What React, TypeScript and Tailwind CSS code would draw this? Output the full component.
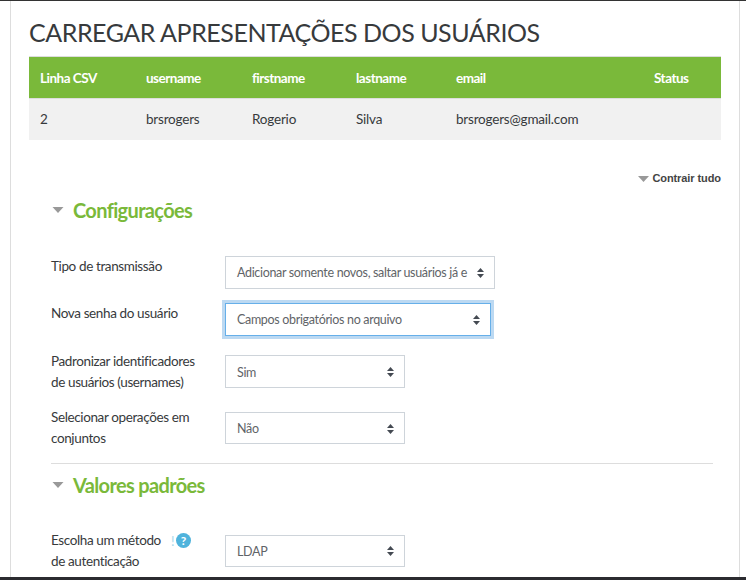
const sans = "font-['Lato','Liberation_Sans',sans-serif]";

function Caret() {
  return (
    <svg width="14" height="8" viewBox="0 0 14 8" className="shrink-0">
      <path d="M1.5 1H12.5L7 7Z" fill="#999999" />
    </svg>
  );
}

function Updown() {
  return (
    <svg width="7" height="10" viewBox="0 0 7 10" className="shrink-0">
      <path d="M3.5 0L7 4H0Z M3.5 10L0 6H7Z" fill="#444a52" />
    </svg>
  );
}

function Select({ text, w, focus, extra }: { text: string; w: string; focus?: boolean; extra?: string }) {
  return (
    <div
      className={`${w} ${extra ?? "h-[33px]"} flex items-center justify-between bg-white pl-[11px] pr-[10px] text-[12.5px] tracking-[-0.33px] text-[#5f6468] border ${
        focus ? "border-[#66afe9] shadow-[0_0_0_3px_#bcd9f2]" : "border-[#ced4da]"
      }`}
    >
      <span className="whitespace-nowrap">{text}</span>
      <Updown />
    </div>
  );
}

function Section({ title, className }: { title: string; className: string }) {
  return (
    <div className={`flex items-center ${className}`}>
      <Caret />
      <h3 className="ml-[8px] text-[20px] leading-[24px] font-bold tracking-[-0.65px] text-[#7ab93a]">{title}</h3>
    </div>
  );
}

const cols = [
  ["Linha CSV", "2", "w-[106px]"],
  ["username", "brsrogers", "w-[106px]"],
  ["firstname", "Rogerio", "w-[104px]"],
  ["lastname", "Silva", "w-[100px]"],
  ["email", "brsrogers@gmail.com", "w-[198px]"],
  ["Status", "", "w-[78px]"],
];

export default function App() {
  return (
    <div className={`h-[580px] w-[746px] flex flex-col overflow-hidden bg-white ${sans}`}>
      <div className="h-px bg-[#333333] shrink-0" />
      <div className="flex-1 min-h-0 ml-[10px] mr-[6px] border-x border-[#dddddd] pl-[18px] pr-[18px] overflow-hidden">
        <h2 className="mt-[14px] h-[41px] text-[25px] leading-[34px] tracking-[-0.46px] text-[#373a3c] whitespace-nowrap">
          CARREGAR APRESENTAÇÕES DOS USUÁRIOS
        </h2>
        <div className="border-t border-[#dddddd] text-[13.5px]">
          <div className="flex h-[41px] items-center bg-[#7ab93a] pt-px font-bold tracking-[-0.5px] text-white">
            {cols.map((c) => (
              <div key={c[0]} className={`${c[2]} pl-[11px] shrink-0`}>{c[0]}</div>
            ))}
          </div>
          <div className="h-px bg-[#dddddd]" />
          <div className="flex h-[41px] items-center bg-[#f1f1f1] pb-px tracking-[-0.2px] text-[#373a3c]">
            {cols.map((c) => (
              <div key={c[0]} className={`${c[2]} pl-[11px] shrink-0`}>{c[1]}</div>
            ))}
          </div>
        </div>
        <div className="mt-[32px] flex items-center justify-end gap-[3px] font-['Liberation_Sans',sans-serif] text-[11px] leading-[13px] font-bold tracking-[-0.08px] text-[#444444]">
          <svg width="11" height="6" viewBox="0 0 11 6"><path d="M0 0H11L5.5 6Z" fill="#999999" /></svg>
          Contrair tudo
        </div>
        <div className="pl-[22px] pr-[8px] text-[13.5px] leading-[21px] tracking-[-0.38px] text-[#373a3c]">
          <Section title="Configurações" className="mt-[13px]" />
          <div className="mt-[34px] flex">
            <div className="w-[174px]">Tipo de transmissão</div>
            <Select text="Adicionar somente novos, saltar usuários já e" w="w-[270px]" />
          </div>
          <div className="mt-[14px] flex">
            <div className="w-[174px]">Nova senha do usuário</div>
            <Select text="Campos obrigatórios no arquivo" w="w-[266px]" focus />
          </div>
          <div className="mt-[19px] flex">
            <div className="w-[174px] -mt-[4px]">Padronizar identificadores<br />de usuários (usernames)</div>
            <Select text="Sim" w="w-[180px]" extra="h-[33px] pt-px" />
          </div>
          <div className="mt-[19px] flex">
            <div className="w-[174px] -mt-[5px]">Selecionar operações em<br />conjuntos</div>
            <Select text="Não" w="w-[180px]" extra="h-[32px] pt-px" />
          </div>
          <div className="mt-[14px] border-t border-[#dddddd]" />
          <Section title="Valores padrões" className="mt-[9px]" />
          <div className="mt-[38px] flex">
            <div className="w-[174px] -mt-[5px] relative">
              Escolha um método<br />de autenticação
              <span className="absolute left-[120px] top-[4px] text-[13px] leading-[14px] text-[#a8d8ea]">!</span>
              <span className="absolute left-[125px] top-[3px] size-[15px] rounded-full bg-[#4fb3dc] text-white text-[12px] leading-[15px] tracking-normal font-bold text-center">?</span>
            </div>
            <Select text="LDAP" w="w-[180px]" extra="h-[32px]" />
          </div>
        </div>
      </div>
      <div className="h-[3px] bg-[#2b2b30] shrink-0" />
    </div>
  );
}
